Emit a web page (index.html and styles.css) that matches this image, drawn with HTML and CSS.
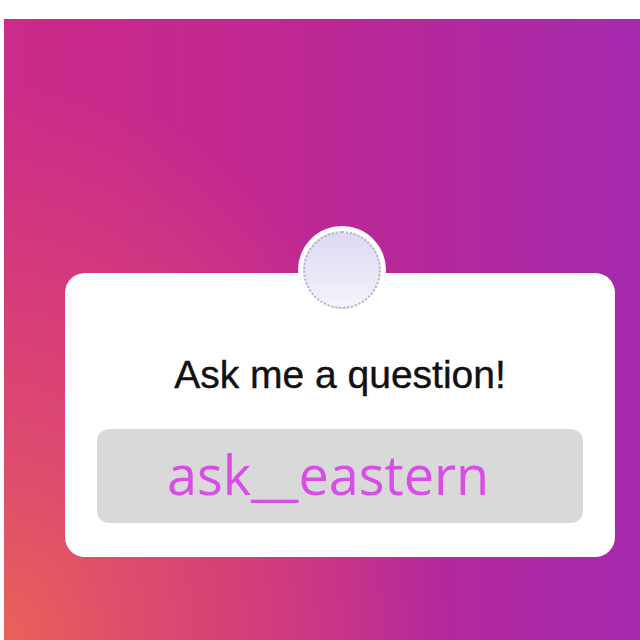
FILE: index.html
```html
<!DOCTYPE html>
<html>
<head>
<meta charset="utf-8">
<link rel="stylesheet" href="styles.css">
</head>
<body>
<div class="page">
  <div class="stage">
    <div class="card">
      <div class="avatar"><div class="avatar-inner"></div></div>
      <div class="title">Ask me a question!</div>
      <div class="answer">ask__eastern</div>
    </div>
  </div>
</div>
</body>
</html>
```
FILE: styles.css
```css
html, body { margin: 0; padding: 0; background: #fff; }
.page {
  width: 640px;
  height: 640px;
  padding: 19px 0 0 4px;
  box-sizing: border-box;
}
.stage {
  width: 636px;
  height: 621px;
  background:
    radial-gradient(ellipse 440px 560px at 0% 100%, #ea6259 0%, #de4c6c 30%, rgba(205,40,135,0) 100%),
    linear-gradient(90deg, #cb2b89 0%, #c42890 35%, #b3289e 70%, #a62aae 100%);
  padding: 254px 0 0 61px;
  box-sizing: border-box;
}
.card {
  position: relative;
  width: 550px;
  height: 284px;
  background: #fff;
  border-radius: 20px;
  box-sizing: border-box;
  padding: 79px 31px 0 31px;
  display: flex;
  flex-direction: column;
  align-items: center;
}
.avatar {
  position: absolute;
  left: 233px;
  top: -47px;
  width: 88px;
  height: 88px;
  border-radius: 50%;
  background: #fff;
  display: flex;
  align-items: center;
  justify-content: center;
}
.avatar-inner {
  width: 78px;
  height: 78px;
  border-radius: 50%;
  box-sizing: border-box;
  border: 2px dotted #b4b4bc;
  background: linear-gradient(180deg, #dcdaf4 0%, #e8e6f6 50%, #f4f3fb 100%);
}
.title {
  font-family: "Liberation Sans", Arial, sans-serif;
  font-size: 39px;
  color: #111;
  line-height: 45px;
  -webkit-text-stroke: 0.4px #111;
}
.answer {
  margin-top: 32px;
  width: 486px;
  height: 94px;
  background: #d9d9d9;
  border-radius: 12px;
  box-sizing: border-box;
  padding-left: 70px;
  font-family: "Open Sans", sans-serif;
  font-size: 54px;
  line-height: 90px;
  color: #d84ce8;
}
```
